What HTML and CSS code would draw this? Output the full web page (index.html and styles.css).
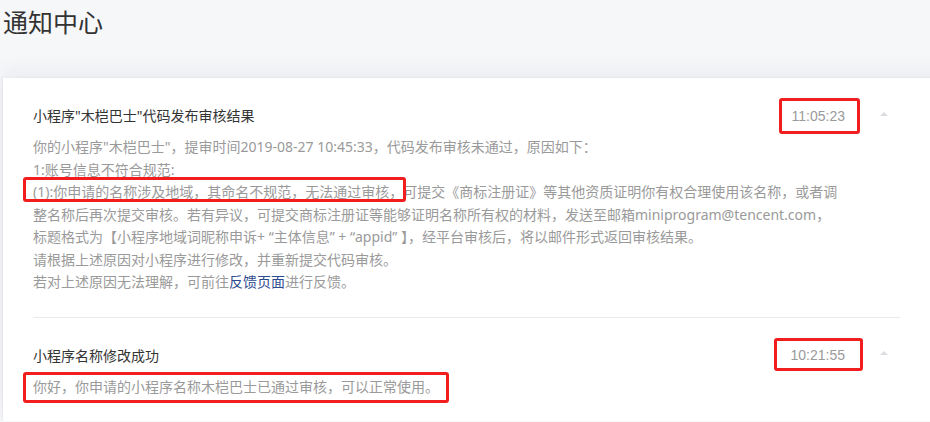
FILE: index.html
```html
<!DOCTYPE html>
<html lang="zh-CN">
<head>
  <meta charset="UTF-8">
  <title>通知中心</title>
  <link rel="stylesheet" href="styles.css">
</head>
<body>

  <h1 class="page-title">通知中心</h1>

  <div class="panel">
    <div class="notice">
      <div class="notice-head">
        <div class="notice-title">小程序"木桤巴士"代码发布审核结果</div>
        <span class="notice-time mark mark-time-a">11:05:23</span>
        <span class="caret"></span>
      </div>
      <div class="notice-body">
        你的小程序"木桤巴士"，提审时间2019-08-27 10:45:33，代码发布审核未通过，原因如下：<br>
        1:账号信息不符合规范:<br>
        <span class="mark mark-reason">(1):你申请的名称涉及地域，其命名不规范，无法通过审核，</span>可提交《商标注册证》等其他资质证明你有权合理使用该名称，或者调<br>
        整名称后再次提交审核。若有异议，可提交商标注册证等能够证明名称所有权的材料，发送至邮箱miniprogram@tencent.com，<br>
        标题格式为【小程序地域词昵称申诉+ “主体信息” + “appid” 】，经平台审核后，将以邮件形式返回审核结果。<br>
        请根据上述原因对小程序进行修改，并重新提交代码审核。<br>
        若对上述原因无法理解，可前往<a class="feedback-link" href="#">反馈页面</a>进行反馈。
      </div>
    </div>

    <div class="notice">
      <div class="notice-head">
        <div class="notice-title">小程序名称修改成功</div>
        <span class="notice-time mark mark-time-b">10:21:55</span>
        <span class="caret"></span>
      </div>
      <div class="notice-body">
        <span class="mark mark-result">你好，你申请的小程序名称木桤巴士已通过审核，可以正常使用。</span>
      </div>
    </div>
  </div>

</body>
</html>
```

FILE: styles.css
```css
body {
  margin: 0;
  background-color: #f6f7f9;
  font-family: "Noto Sans", "Noto Sans CJK SC", sans-serif;
  color: #333;
  overflow: hidden;
}

.page-title {
  margin: 0;
  padding: 4px 0 0 3px;
  font-size: 25px;
  font-weight: normal;
  line-height: 34px;
  color: #333;
  font-family: "Noto Sans CJK SC", sans-serif;
}

.panel {
  margin-top: 40px;
  margin-left: 3px;
  width: 960px;
  padding-left: 30px;
  background-color: #fff;
  box-shadow: 0 -8px 18px rgba(30, 40, 70, 0.05), -1px 0 2px rgba(30, 40, 70, 0.06);
}

.notice {
  width: 867px;
  padding: 26px 0 23px 0;
}

.notice + .notice {
  border-top: 1px solid #e8e9ee;
}

.notice-head {
  display: flex;
  align-items: center;
  height: 23px;
}

.notice-title {
  flex: 1;
  font-size: 14px;
  line-height: 23px;
  color: #333;
}

.notice-time {
  font-size: 14px;
  color: #9a9a9a;
  font-family: "Liberation Sans", "Noto Sans", sans-serif;
  margin-right: 35px;
}

.caret {
  width: 0;
  height: 0;
  border-left: 4px solid transparent;
  border-right: 4px solid transparent;
  border-bottom: 4px solid #dcdde0;
  margin-right: 12px;
  margin-bottom: 4px;
}

.notice-body {
  margin-top: 9px;
  font-size: 14px;
  line-height: 22.5px;
  color: #9a9a9a;
  white-space: nowrap;
}

.feedback-link {
  color: #2b4a8e;
  text-decoration: none;
}

/* red annotation boxes drawn over the text */
.mark {
  position: relative;
}

.mark::after {
  content: "";
  position: absolute;
  border: 3px solid #f21d1d;
  border-radius: 3px;
}

.mark-time-a::after {
  left: -13px;
  right: -15px;
  top: -10px;
  bottom: -10px;
}

.mark-time-b::after {
  left: -17px;
  right: -18px;
  top: -9px;
  bottom: -8px;
}

.mark-reason::after {
  left: -10px;
  right: -3px;
  top: -5px;
  bottom: -1px;
}

.mark-result::after {
  left: -10px;
  right: -10px;
  top: -5px;
  bottom: -7px;
}
```
